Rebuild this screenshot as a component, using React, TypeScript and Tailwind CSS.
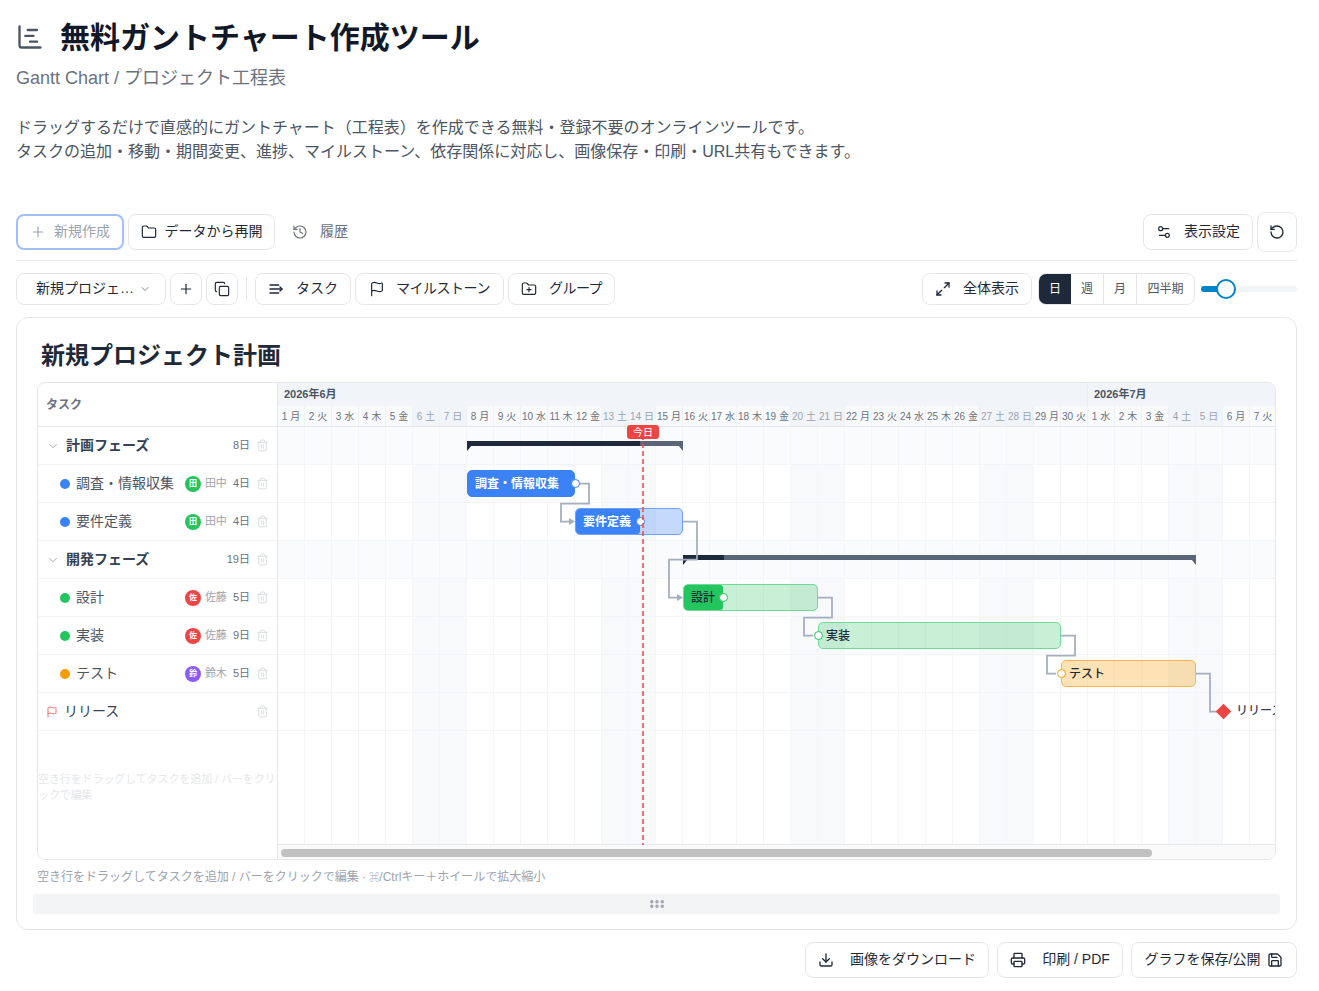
import React from "react";
import { Plus, Folder, History, Settings2, RotateCcw, ChevronDown, Copy, Flag, FolderPlus, Maximize2, Download, Printer, Save, Trash2, GripHorizontal, ChartGantt } from "lucide-react";

const fontCls = "font-['Liberation_Sans','Noto_Sans_CJK_JP',sans-serif]";
const btn = "flex items-center justify-center rounded-lg border border-[#e5e7eb] bg-white text-sm text-[#1f2937] shrink-0";

const weekdays = ["月", "火", "水", "木", "金", "土", "日"];
type Day = { n: number; w: string; off: boolean };
const days: Day[] = Array.from({ length: 37 }, (_, i) => {
  const w = i % 7;
  return { n: i < 30 ? i + 1 : i - 29, w: weekdays[w], off: w >= 5 };
});

type Row =
  | { kind: "group"; name: string; d: string }
  | { kind: "task"; name: string; dot: string; av: string; avc: string; who: string; d: string }
  | { kind: "ms"; name: string };

const rows: Row[] = [
  { kind: "group", name: "計画フェーズ", d: "8日" },
  { kind: "task", name: "調査・情報収集", dot: "bg-[#3b82f6]", av: "田", avc: "bg-[#22c55e]", who: "田中", d: "4日" },
  { kind: "task", name: "要件定義", dot: "bg-[#3b82f6]", av: "田", avc: "bg-[#22c55e]", who: "田中", d: "4日" },
  { kind: "group", name: "開発フェーズ", d: "19日" },
  { kind: "task", name: "設計", dot: "bg-[#22c55e]", av: "佐", avc: "bg-[#ef4444]", who: "佐藤", d: "5日" },
  { kind: "task", name: "実装", dot: "bg-[#22c55e]", av: "佐", avc: "bg-[#ef4444]", who: "佐藤", d: "9日" },
  { kind: "task", name: "テスト", dot: "bg-[#f59e0b]", av: "鈴", avc: "bg-[#8b5cf6]", who: "鈴木", d: "5日" },
  { kind: "ms", name: "リリース" },
];

function TaskRow({ r }: { r: Row }) {
  return (
    <div className="flex h-[38px] shrink-0 items-center border-b border-[#f3f4f6] pr-2">
      {r.kind === "group" && (
        <>
          <ChevronDown size={14} strokeWidth={1.5} className="ml-2 text-[#9ca3af]" />
          <span className="ml-1.5 flex-1 -translate-y-px text-sm font-semibold text-[#374151]">{r.name}</span>
          <span className="text-[11px] text-[#6b7280]">{r.d}</span>
        </>
      )}
      {r.kind === "task" && (
        <>
          <span className={`ml-[22px] h-2.5 w-2.5 rounded-full ${r.dot}`} />
          <span className="ml-1.5 flex-1 -translate-y-px text-sm text-[#4b5563]">{r.name}</span>
          <span className={`flex h-4 w-4 items-center justify-center rounded-full text-[8px] font-semibold text-white ${r.avc}`}>{r.av}</span>
          <span className="ml-1 text-[11px] text-[#9ca3af]">{r.who}</span>
          <span className="ml-1.5 text-[11px] text-[#6b7280]">{r.d}</span>
        </>
      )}
      {r.kind === "ms" && (
        <>
          <Flag size={12} strokeWidth={1.5} className="ml-[8px] text-[#ef4444]" />
          <span className="ml-1.5 flex-1 -translate-y-px text-sm text-[#374151]">{r.name}</span>
        </>
      )}
      <Trash2 size={13} strokeWidth={1.5} className="ml-1.5 text-[#d1d5db]" />
    </div>
  );
}

function GridRow({ tint, grow }: { tint?: boolean; grow?: boolean }) {
  return (
    <div className={`flex w-[999px] ${grow ? "flex-1" : "h-[38px] border-b border-[#f4f5f8]"}`}>
      {days.map((d, i) => (
        <div
          key={i}
          className={`h-full w-[27px] shrink-0 border-r border-[#f5f6f9] ${tint ? "bg-[#fafbfd]" : d.off ? "bg-[#f8f9fb]" : "bg-white"}`}
        />
      ))}
    </div>
  );
}

function Bar({ x, w, y, solid, light, border, progress, label, white }: { x: number; w: number; y: number; solid: string; light: string; border: string; progress: number; label: string; white?: boolean }) {
  return (
    <div className={`absolute h-[27px] overflow-hidden rounded-[5px] border-[1.5px] ${light} ${border}`} style={{ left: x, width: w, top: y }}>
      {progress > 0 && <div className={`h-full rounded-r-[3px] ${solid}`} style={{ width: progress }} />}
      <span className={`absolute left-[7px] top-0 flex h-full items-center text-xs ${white ? "font-semibold text-white" : "font-medium text-[#1f2937]"}`}>{label}</span>
    </div>
  );
}

function Summary({ x, w, y, p }: { x: number; w: number; y: number; p: number }) {
  return (
    <div className="absolute h-[9px]" style={{ left: x, width: w, top: y }}>
      <div className="relative h-[5px] bg-[#5a6578]">
        <div className="h-full bg-[#1e293b]" style={{ width: p }} />
      </div>
      <div className="absolute left-0 top-[4px] h-0 w-0 border-r-[5px] border-t-[6px] border-r-transparent border-t-[#1e293b]" />
      <div className="absolute right-0 top-[4px] h-0 w-0 border-l-[5px] border-t-[6px] border-l-transparent border-t-[#5a6578]" />
    </div>
  );
}

function Handle({ x, y, c }: { x: number; y: number; c: string }) {
  return <div className={`absolute h-[9px] w-[9px] rounded-full border-[1.5px] bg-white ${c}`} style={{ left: x - 4.5, top: y - 4.5 }} />;
}

function TaskIcon() {
  return (
    <svg width="16" height="16" viewBox="0 0 24 24" fill="none" stroke="currentColor" strokeWidth="2" strokeLinecap="round" strokeLinejoin="round">
      <path d="M3 6h13" />
      <path d="M3 12h18" />
      <path d="M3 18h13" />
      <path d="M18 9l3 3-3 3" />
    </svg>
  );
}

const t = "-translate-y-px";

export default function App() {
  return (
    <div className={`${fontCls} min-h-[991px] bg-white pl-4 pr-[22px] pt-[15px] text-[#1f2937]`}>
      <div className="flex h-11 items-center">
        <ChartGantt size={28} strokeWidth={2} className="text-[#4b5563]" />
        <h1 className="ml-4 translate-y-px text-[30px] font-bold leading-9 text-[#111827]">無料ガントチャート作成ツール</h1>
      </div>
      <p className="mt-[5px] text-lg leading-7 text-[#6b7280]">Gantt Chart / プロジェクト工程表</p>
      <p className="mt-6 text-base leading-6 text-[#4b5563]">
        ドラッグするだけで直感的にガントチャート（工程表）を作成できる無料・登録不要のオンラインツールです。
        <br />
        タスクの追加・移動・期間変更、進捗、マイルストーン、依存関係に対応し、画像保存・印刷・URL共有もできます。
      </p>

      <div className="mt-12 flex h-10 items-center gap-1">
        <button className="flex h-9 w-[108px] items-center justify-center gap-2 rounded-lg border-2 border-[#a3bffa] bg-white text-sm text-[#9ca3af]">
          <Plus size={16} strokeWidth={1.75} />
          <span className={t}>新規作成</span>
        </button>
        <button className={`${btn} h-9 w-[147px] gap-2`}>
          <Folder size={16} strokeWidth={1.75} />
          <span className={t}>データから再開</span>
        </button>
        <button className="ml-[9px] flex h-9 items-center gap-3 px-1 text-sm text-[#6b7280]">
          <History size={16} strokeWidth={1.75} />
          <span className={t}>履歴</span>
        </button>
        <div className="flex-1" />
        <button className={`${btn} h-9 w-[110px] gap-3`}>
          <Settings2 size={16} strokeWidth={1.75} />
          <span className={t}>表示設定</span>
        </button>
        <button className={`${btn} h-10 w-10`}>
          <RotateCcw size={16} strokeWidth={2} />
        </button>
      </div>

      <div className="mt-2 border-t border-[#e5e7eb]" />

      <div className="mt-3 flex h-8 items-center text-sm">
        <button className={`${btn} h-8 w-[150px] !justify-start gap-[5px] pl-[19px]`}>
          <span className={t}>新規プロジェ…</span>
          <ChevronDown size={12} strokeWidth={1.75} className="text-[#6b7280]" />
        </button>
        <button className={`${btn} ml-1 h-8 w-8`}><Plus size={16} strokeWidth={1.75} /></button>
        <button className={`${btn} ml-1 h-8 w-8`}><Copy size={16} strokeWidth={1.75} /></button>
        <div className="mx-2 h-6 w-px bg-[#e5e7eb]" />
        <button className={`${btn} h-8 w-24 gap-3`}><TaskIcon /><span className={t}>タスク</span></button>
        <button className={`${btn} ml-1 h-8 w-[149px] gap-[11px]`}><Flag size={16} strokeWidth={1.75} /><span className={`${t} tracking-[-0.5px]`}>マイルストーン</span></button>
        <button className={`${btn} ml-1 h-8 w-[107px] gap-3`}><FolderPlus size={16} strokeWidth={1.75} /><span className={`${t} tracking-[-0.5px]`}>グループ</span></button>
        <div className="flex-1" />
        <button className={`${btn} h-8 w-[110px] gap-3`}><Maximize2 size={16} strokeWidth={2} /><span className={t}>全体表示</span></button>
        <div className="ml-1.5 flex h-8 w-[157px] overflow-hidden rounded-lg border border-[#e5e7eb] text-xs text-[#4b5563]">
          <div className="flex w-8 items-center justify-center bg-[#1e293b] text-white">日</div>
          <div className="flex w-[33px] items-center justify-center border-r border-[#e5e7eb]">週</div>
          <div className="flex w-[33px] items-center justify-center border-r border-[#e5e7eb]">月</div>
          <div className="flex flex-1 items-center justify-center">四半期</div>
        </div>
        <div className="relative ml-1.5 h-[6px] w-24 rounded-full bg-[#f3f4f6]">
          <div className="h-full w-[24px] rounded-full bg-[#0284c7]" />
          <div className="absolute left-[15px] top-[-7px] h-5 w-5 rounded-full border-2 border-[#0284c7] bg-white" />
        </div>
      </div>

      <div className="mt-3 h-[613px] rounded-xl border border-[#e5e7eb] bg-white">
        <h2 className="ml-6 mt-[22px] text-2xl font-bold leading-8 text-[#1f2937]">新規プロジェクト計画</h2>

        <div className="mx-5 mt-[10px] flex h-[478px] overflow-hidden rounded-lg border border-[#e5e7eb]">
          <div className="flex w-[240px] shrink-0 flex-col border-r border-[#e5e7eb]">
            <div className="flex h-[44px] shrink-0 items-center border-b border-[#e5e7eb] pl-2 text-xs font-semibold text-[#6b7280]">タスク</div>
            {rows.map((r) => <TaskRow key={r.name} r={r} />)}
            <p className="mt-[40px] text-[11px] leading-4 tracking-[-0.1px] text-[#e5e7eb]">空き行をドラッグしてタスクを追加 / バーをクリックで編集</p>
          </div>

          <div className="flex min-w-0 flex-1 flex-col overflow-hidden">
            <div className="flex h-[23px] w-[999px] shrink-0 bg-[#f1f4f8] text-[11px] font-semibold leading-[23px] text-[#4b5563]">
              <div className="w-[810px] border-r border-[#e8ecf1] pl-[6px]">2026年6月</div>
              <div className="pl-[6px]">2026年7月</div>
            </div>
            <div className="flex h-[21px] w-[999px] shrink-0 border-b border-[#e5e7eb] bg-[#f1f4f8]">
              {days.map((d, i) => (
                <div
                  key={i}
                  className={`flex w-[27px] shrink-0 items-center justify-center whitespace-nowrap border-r border-[#eef1f5] text-[10px] ${d.off ? "bg-[#f1f4f8] text-[#9ca3af]" : "bg-[#f9fafc] text-[#6b7280]"}`}
                >
                  {d.n} {d.w}
                </div>
              ))}
            </div>

            <div className="relative flex min-h-0 flex-1 flex-col">
              <GridRow tint />
              <GridRow />
              <GridRow />
              <GridRow tint />
              <GridRow />
              <GridRow />
              <GridRow />
              <GridRow />
              <GridRow grow />

              <Summary x={189} w={216} y={14} p={173} />
              <Summary x={405} w={513} y={128} p={41} />

              <svg className="absolute left-0 top-0" width="997" height="418" fill="none" stroke="#a3aebf" strokeWidth="1.75">
                <path d="M297 56.5H311V76.5H283V94.5H292" />
                <path d="M405 94.5H419V132.5H391V170.5H400" />
                <path d="M540 170.5H554V190.5H526V208.5H535" />
                <path d="M783 208.5H797V228.5H769V246.5H778" />
                <path d="M918 246.5H932V284.5H940" />
                <path d="M291 91L297 94.5L291 98Z" fill="#a3aebf" stroke="none" />
                <path d="M399 167L405 170.5L399 174Z" fill="#a3aebf" stroke="none" />
              </svg>

              <Bar x={189} w={108} y={43} solid="bg-[#3b82f6]" light="bg-[#3b82f6]" border="border-[#3b82f6]" progress={108} label="調査・情報収集" white />
              <Bar x={297} w={108} y={81} solid="bg-[#3b82f6]" light="bg-[#3b82f6]/30" border="border-[#70a0f9]" progress={64} label="要件定義" white />
              <Bar x={405} w={135} y={157} solid="bg-[#22c55e]" light="bg-[#22c55e]/25" border="border-[#71da97]" progress={39} label="設計" />
              <Bar x={540} w={243} y={195} solid="bg-[#22c55e]" light="bg-[#22c55e]/25" border="border-[#71da97]" progress={0} label="実装" />
              <Bar x={783} w={135} y={233} solid="bg-[#f59e0b]" light="bg-[#f59e0b]/30" border="border-[#fab551]" progress={0} label="テスト" />

              <Handle x={297.5} y={56.5} c="border-[#3b82f6]" />
              <Handle x={362} y={94.5} c="border-[#3b82f6]" />
              <Handle x={445.5} y={170.5} c="border-[#22c55e]" />
              <Handle x={540} y={208.5} c="border-[#22c55e]" />
              <Handle x={783} y={246.5} c="border-[#f59e0b]" />

              <div className="absolute left-[940px] top-[279px] h-[11px] w-[11px] rotate-45 bg-[#ef4444]" />
              <span className="absolute left-[958px] top-[276px] whitespace-nowrap text-xs font-medium leading-4 text-[#374151]">リリース</span>

              <svg className="absolute left-[364px] top-0" width="2" height="418">
                <line x1="1" y1="0" x2="1" y2="418" stroke="#ef4444" strokeWidth="1.5" strokeDasharray="5 3" />
              </svg>
              <div className="absolute left-[349px] top-[-2px] flex h-[14px] w-8 items-center justify-center rounded-[3px] bg-[#ef4444] text-[10px] text-white">今日</div>
            </div>

            <div className="flex h-[15px] shrink-0 items-center border-t border-[#e5e7eb] bg-[#fafafa] pl-[3px] pt-px">
              <div className="h-2 w-[871px] rounded-full bg-[#c1c1c1]" />
            </div>
          </div>
        </div>

        <p className="ml-5 mt-[9px] text-xs leading-4 text-[#9ca3af]">空き行をドラッグしてタスクを追加 / バーをクリックで編集 · <span className="text-[10px]">⌘</span>/Ctrlキー＋ホイールで拡大縮小</p>
        <div className="mx-4 mt-2 flex h-5 items-center justify-center rounded bg-[#f3f4f6] text-[#9ca3af]">
          <GripHorizontal size={18} strokeWidth={2.5} />
        </div>
      </div>

      <div className="mt-3 flex h-9 justify-end gap-2">
        <button className={`${btn} w-[184px] gap-4`}><Download size={16} strokeWidth={2} /><span className={t}>画像をダウンロード</span></button>
        <button className={`${btn} w-[126px] gap-4`}><Printer size={16} strokeWidth={2} /><span className={t}>印刷 / PDF</span></button>
        <button className={`${btn} w-[166px] gap-[7px]`}><span className={t}>グラフを保存/公開</span><Save size={16} strokeWidth={2} /></button>
      </div>
    </div>
  );
}
